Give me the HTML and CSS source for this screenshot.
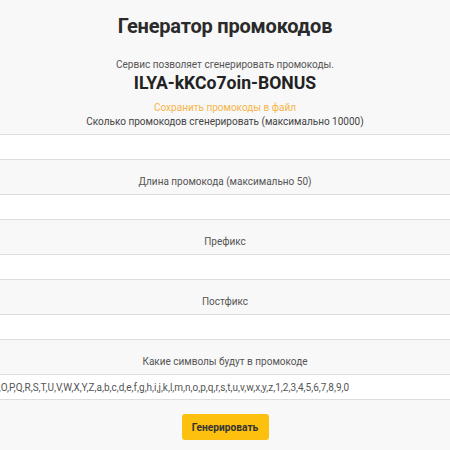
FILE: index.html
```html
<!DOCTYPE html>
<html lang="ru">
<head>
<meta charset="utf-8">
<title>Генератор промокодов</title>
<link rel="stylesheet" href="styles.css">
</head>
<body>
<main class="page">
  <h1 class="title">Генератор промокодов</h1>
  <p class="lead">Сервис позволяет сгенерировать промокоды.</p>
  <p class="code">ILYA-kKCo7oin-BONUS</p>
  <a class="save" href="#">Сохранить промокоды в файл</a>
  <form class="form">
    <label class="label first">Сколько промокодов сгенерировать (максимально 10000)</label>
    <input class="field" type="text">
    <label class="label">Длина промокода (максимально 50)</label>
    <input class="field" type="text">
    <label class="label">Префикс</label>
    <input class="field" type="text">
    <label class="label">Постфикс</label>
    <input class="field" type="text">
    <label class="label">Какие символы будут в промокоде</label>
    <input class="field chars" type="text" value="A,B,C,D,E,F,G,H,I,J,K,L,M,N,O,P,Q,R,S,T,U,V,W,X,Y,Z,a,b,c,d,e,f,g,h,i,j,k,l,m,n,o,p,q,r,s,t,u,v,w,x,y,z,1,2,3,4,5,6,7,8,9,0">
    <button class="btn" type="button">Генерировать</button>
  </form>
</main>
</body>
</html>
```
FILE: styles.css
```css
html, body {
  margin: 0;
  padding: 0;
  background: #f8f8f8;
}
body {
  font-family: Roboto, "Noto Sans", sans-serif;
  color: #444;
  overflow: hidden;
}
.page {
  display: flex;
  flex-direction: column;
  align-items: center;
  text-align: center;
  padding-top: 11px;
}
.title {
  margin: 0;
  font-size: 20px;
  letter-spacing: -0.2px;
  font-weight: 700;
  color: #2a2a2a;
  line-height: 30px;
}
.lead {
  margin: 16px 0 0;
  font-size: 10px;
  line-height: 16px;
  color: #555;
}
.code {
  margin: 0;
  font-size: 17.6px;
  font-weight: 700;
  line-height: 20px;
  color: #222;
}
.save {
  margin-top: 8px;
  font-size: 10px;
  line-height: 14px;
  color: #f5b548;
  text-decoration: none;
}
.form {
  align-self: stretch;
  display: flex;
  flex-direction: column;
  align-items: center;
}
.label {
  display: block;
  font-size: 10px;
  line-height: 14px;
  color: #555;
  margin: 15px 0 5px;
}
.label.first {
  margin-top: 0;
  color: #444;
}
.field {
  box-sizing: border-box;
  align-self: stretch;
  width: 100%;
  height: 26px;
  margin: 0;
  border: 1px solid #dedede;
  border-left: 0;
  border-right: 0;
  background: #fff;
  font-family: Roboto, "Noto Sans", sans-serif;
  font-size: 10px;
  color: #555;
  padding: 0;
  outline: none;
}
.chars {
  text-indent: -112px;
}
.btn {
  margin-top: 14px;
  width: 87px;
  height: 26px;
  border: 0;
  border-radius: 3px;
  background: #fdc00f;
  color: #333;
  font-family: Roboto, "Noto Sans", sans-serif;
  font-size: 10.2px;
  font-weight: 700;
  padding: 0;
}
```
